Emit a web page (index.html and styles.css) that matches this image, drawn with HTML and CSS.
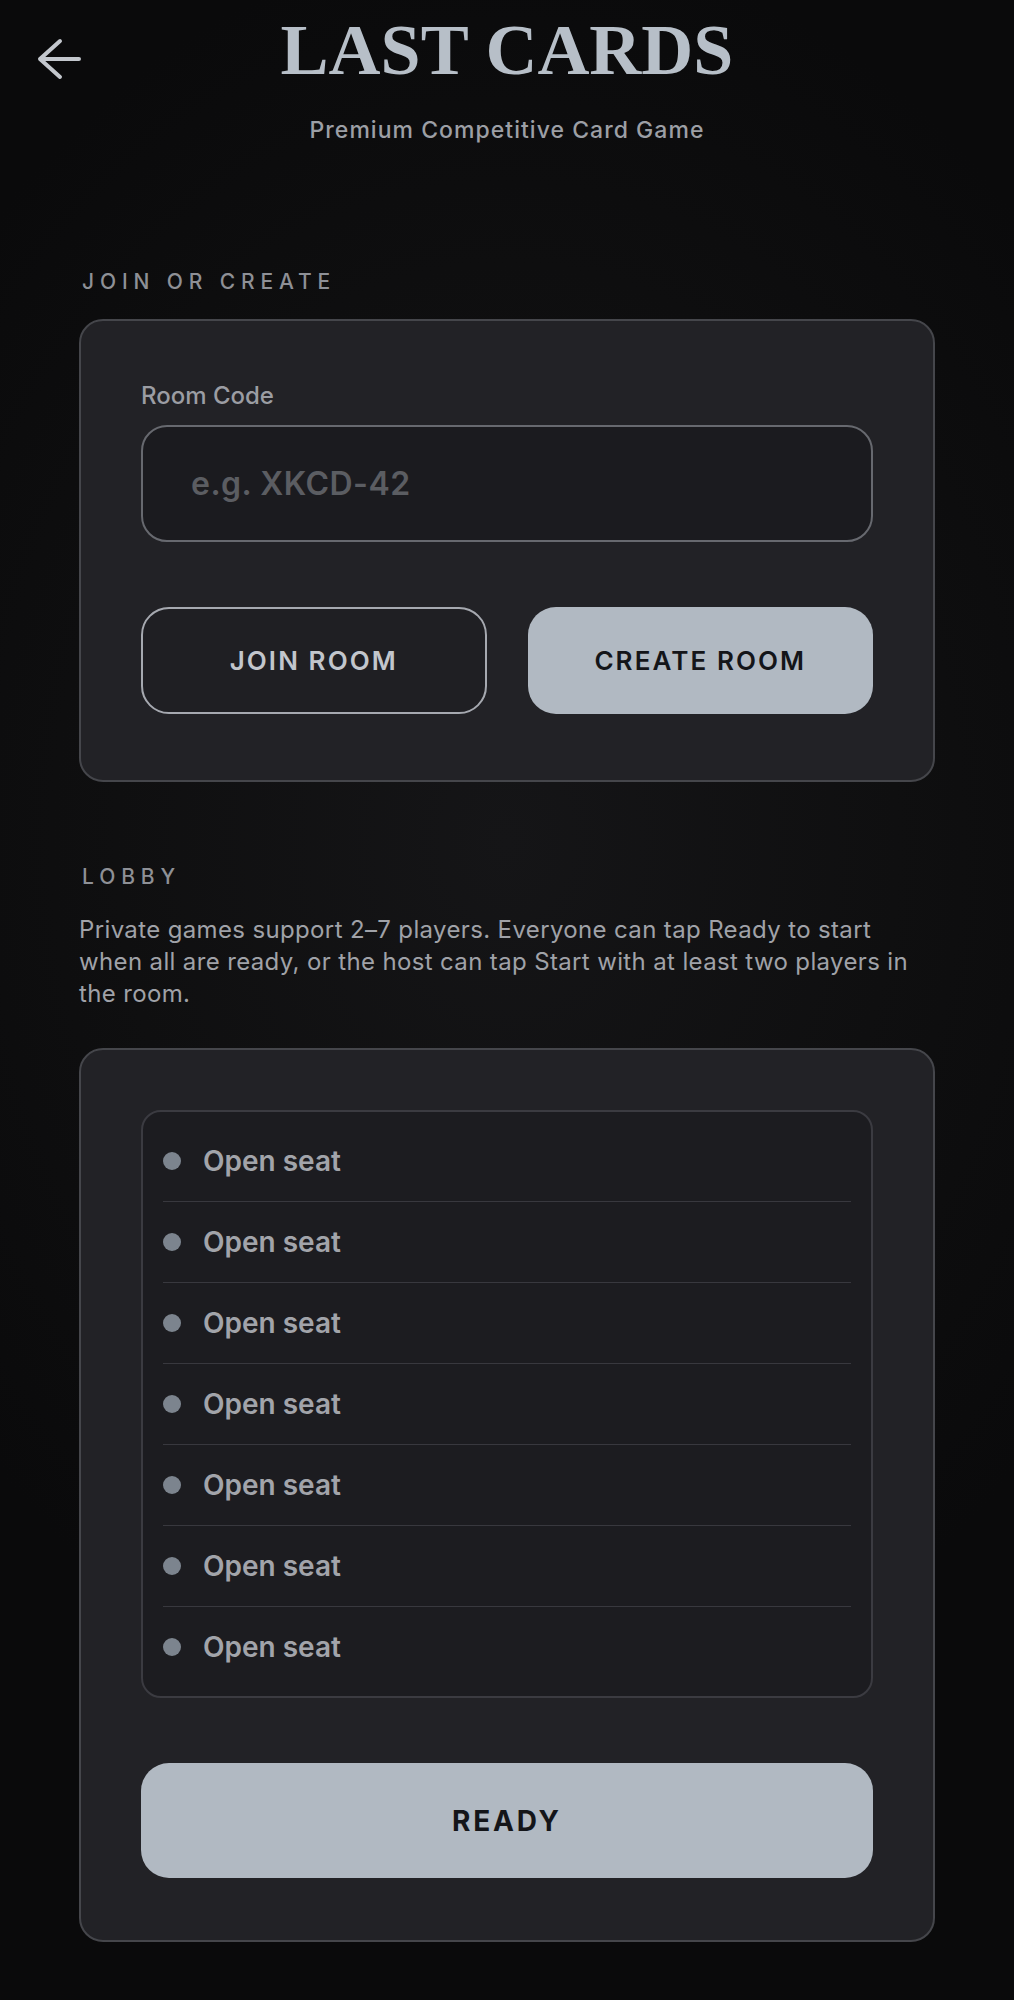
FILE: index.html
```html
<!DOCTYPE html>
<html lang="en">
<head>
<meta charset="utf-8">
<title>Last Cards</title>
<link rel="stylesheet" href="styles.css">
</head>
<body>
<div class="page">
  <header class="header">
    <button class="back" aria-label="Back">
      <svg width="46" height="44" viewBox="0 0 46 44" fill="none" stroke="currentColor" stroke-width="4" stroke-linecap="round" stroke-linejoin="round"><path d="M43 22H4M24 4L4 22L24 40"/></svg>
    </button>
    <h1 class="title">LAST CARDS</h1>
    <span class="spacer"></span>
  </header>
  <p class="subtitle">Premium Competitive Card Game</p>

  <main class="content">
    <h2 class="section-label label-join">JOIN OR CREATE</h2>
    <section class="card card-join">
      <label class="field-label" for="code">Room Code</label>
      <input id="code" class="code-input" type="text" placeholder="e.g. XKCD-42">
      <div class="actions">
        <button class="btn btn-outline">JOIN ROOM</button>
        <button class="btn btn-solid">CREATE ROOM</button>
      </div>
    </section>

    <h2 class="section-label label-lobby">LOBBY</h2>
    <p class="lobby-desc">Private games support 2–7 players. Everyone can tap Ready to start when all are ready, or the host can tap Start with at least two players in the room.</p>
    <section class="card card-lobby">
      <ul class="seats">
        <li class="seat"><span class="dot"></span><span class="seat-name">Open seat</span></li>
        <li class="seat"><span class="dot"></span><span class="seat-name">Open seat</span></li>
        <li class="seat"><span class="dot"></span><span class="seat-name">Open seat</span></li>
        <li class="seat"><span class="dot"></span><span class="seat-name">Open seat</span></li>
        <li class="seat"><span class="dot"></span><span class="seat-name">Open seat</span></li>
        <li class="seat"><span class="dot"></span><span class="seat-name">Open seat</span></li>
        <li class="seat"><span class="dot"></span><span class="seat-name">Open seat</span></li>
      </ul>
      <button class="btn btn-solid btn-ready">READY</button>
    </section>
  </main>
</div>
</body>
</html>
```

FILE: styles.css
```css
* { box-sizing: border-box; }

html, body {
  margin: 0;
  padding: 0;
}

body {
  min-height: 2000px;
  background-color: #0b0b0c;
  background-image: radial-gradient(ellipse 70% 45% at 50% 42%, #151517 0%, #0f0f10 55%, #0a0a0b 100%);
  font-family: Inter, "Noto Sans", sans-serif;
  color: #a0a2a8;
}

.page {
  width: 1014px;
  padding-bottom: 60px;
}

.header {
  display: grid;
  grid-template-columns: 1fr auto 1fr;
  padding-top: 14px;
}

.back {
  justify-self: start;
  align-self: start;
  margin: 23px 0 0 36px;
  padding: 0;
  border: 0;
  background: none;
  color: #c3c7cd;
  line-height: 0;
  cursor: pointer;
}

.title {
  margin: 0;
  font-family: "Liberation Serif", "Times New Roman", serif;
  font-weight: 700;
  font-size: 72px;
  line-height: 72px;
  color: #b7bfc8;
  white-space: nowrap;
}

.subtitle {
  margin: 31px 0 0;
  text-align: center;
  font-size: 23px;
  line-height: 26px;
  font-weight: 500;
  letter-spacing: 0.045em;
  color: #9c9fa5;
}

.content {
  padding: 0 79px;
}

.section-label {
  margin: 0;
  font-size: 21px;
  line-height: 25px;
  font-weight: 500;
  letter-spacing: 0.28em;
  color: #8e9096;
  padding-left: 3px;
}

.label-join { margin-top: 126px; }
.label-lobby { margin-top: 82px; }

.card {
  background: #222226;
  border: 2px solid #45464b;
  border-radius: 24px;
  padding: 60px;
}

.card-join {
  margin-top: 25px;
  padding-bottom: 66px;
}

.field-label {
  display: block;
  font-size: 24px;
  line-height: 29px;
  font-weight: 500;
  color: #9b9da3;
}

.code-input {
  display: block;
  width: 100%;
  height: 117px;
  margin-top: 15px;
  padding: 0 0 0 48px;
  background: #1b1b1f;
  border: 2px solid #67696f;
  border-radius: 26px;
  font-family: Inter, "Noto Sans", sans-serif;
  font-size: 32px;
  font-weight: 600;
  letter-spacing: 0.015em;
  color: #c8ccd2;
  outline: none;
}

.code-input::placeholder {
  color: #5b5d62;
}

.actions {
  display: grid;
  grid-template-columns: 1fr 1fr;
  gap: 41px;
  margin-top: 65px;
}

.btn {
  height: 107px;
  border-radius: 28px;
  font-family: Inter, "Noto Sans", sans-serif;
  font-size: 26px;
  font-weight: 600;
  letter-spacing: 0.08em;
  cursor: pointer;
}

.btn-outline {
  background: #1f1f23;
  border: 2px solid #a6a9b0;
  color: #c2c6cc;
}

.btn-solid {
  background: #b1b9c2;
  border: 0;
  color: #141519;
}

.lobby-desc {
  margin: 25px 0 0;
  padding-right: 6px;
  font-size: 24px;
  line-height: 32px;
  letter-spacing: 0.015em;
  color: #a0a2a8;
}

.card-lobby {
  margin-top: 38px;
  padding-bottom: 62px;
}

.seats {
  list-style: none;
  margin: 0;
  padding: 9px 20px;
  background: #1c1c20;
  border: 2px solid #3b3b41;
  border-radius: 20px;
}

.seat {
  display: flex;
  align-items: center;
  gap: 22px;
  height: 81px;
  border-bottom: 1px solid #38383e;
}

.seat:last-child {
  height: 80px;
  border-bottom: 0;
}

.dot {
  width: 18px;
  height: 18px;
  border-radius: 50%;
  background: #7c848e;
  flex: none;
}

.seat-name {
  font-size: 28px;
  font-weight: 600;
  color: #a2a4aa;
}

.btn-ready {
  display: block;
  width: 100%;
  height: 115px;
  margin-top: 65px;
  font-size: 28px;
  font-weight: 700;
  letter-spacing: 0.1em;
  border-radius: 28px;
}
```
